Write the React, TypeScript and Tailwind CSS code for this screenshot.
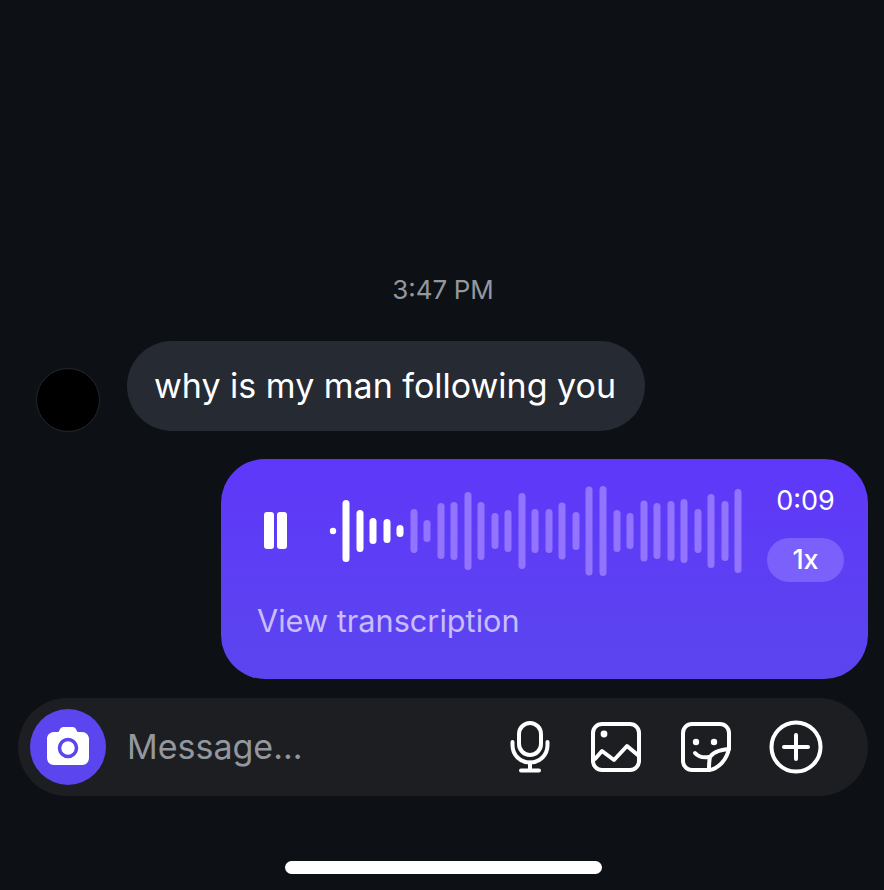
const font = { fontFamily: 'Inter, "Liberation Sans", sans-serif' }

// x position, height of each waveform bar, in px
const playedBars = [
  [346, 62],
  [360, 42],
  [373, 26],
  [387, 24],
]
const restBars = [
  [414, 44], [427, 22], [441, 56], [454, 58], [468, 78], [481, 58], [495, 36], [508, 42],
  [522, 76], [535, 44], [549, 44], [562, 57], [576, 38], [589, 89], [603, 90], [617, 42],
  [630, 36], [644, 61], [657, 56], [671, 60], [684, 64], [698, 44], [711, 74], [725, 60],
  [738, 84],
]

function Waveform() {
  return (
    <svg width="416" height="92" viewBox="329 485 416 92" className="shrink-0">
      <circle cx="333" cy="531" r="3.2" fill="#fff" />
      {playedBars.map(([x, h]) => (
        <rect key={x} x={x - 3.5} y={531 - h / 2} width="7" height={h} rx="3.5" fill="#fff" />
      ))}
      <rect x="396.5" y="525" width="7" height="12" rx="3.5" fill="#fff" />
      {restBars.map(([x, h]) => (
        <rect key={x} x={x - 3.5} y={531 - h / 2} width="7" height={h} rx="3.5" fill="#9274ff" />
      ))}
    </svg>
  )
}

function CameraIcon() {
  return (
    <svg width="44" height="42" viewBox="0 0 44 42">
      <path
        d="M8 6h4.5l1.6-3C15 1.4 16.400 1 18 1h8c1.600 0 3 .4 3.900 2l1.600 3H36c4 0 7 3 7 7v19c0 4-3 7-7 7H8c-4 0-7-3-7-7V13c0-4 3-7 7-7z"
        fill="#fff"
      />
      <circle cx="22" cy="22" r="8.500" fill="none" stroke="#5b45ee" strokeWidth="3.500" />
    </svg>
  )
}

function MicIcon() {
  return (
    <svg width="40" height="52" viewBox="0 0 40 52" fill="none" stroke="#fff" strokeWidth="4" strokeLinecap="round">
      <rect x="9" y="2" width="22" height="32" rx="11" />
      <path d="M2.500 21v3c0 10 7.500 17.500 17.500 17.500S37.500 34 37.500 24v-3" />
      <path d="M20 41.500V49M11 49.500h18" />
    </svg>
  )
}

function ImageIcon() {
  return (
    <svg width="50" height="50" viewBox="0 0 50 50" fill="none" stroke="#fff" strokeWidth="4" strokeLinecap="round" strokeLinejoin="round">
      <rect x="2" y="2" width="46" height="46" rx="9" />
      <path d="M4 37l7-8 12 9 13-14 12 10" />
      <circle cx="13" cy="12" r="3.400" fill="#fff" stroke="none" />
    </svg>
  )
}

function StickerIcon() {
  return (
    <svg width="50" height="50" viewBox="0 0 50 50" fill="none" stroke="#fff" strokeWidth="4" strokeLinecap="round" strokeLinejoin="round">
      <path d="M48 26V11c0-5-4-9-9-9H11c-5 0-9 4-9 9v28c0 5 4 9 9 9h17C37 47 46 38 48 26z" />
      <path d="M48 27C41 28 33 29 29 35c-1 4-1 9-1 13" />
      <path d="M14 31c3 3.500 8 5 14 4" />
      <circle cx="15" cy="20" r="3.200" fill="#fff" stroke="none" />
      <circle cx="33" cy="20" r="3.200" fill="#fff" stroke="none" />
    </svg>
  )
}

function PlusIcon() {
  return (
    <svg width="54" height="54" viewBox="0 0 54 54" fill="none" stroke="#fff" strokeWidth="4" strokeLinecap="round">
      <circle cx="27" cy="27" r="24.500" />
      <path d="M27 15v24M15 27h24" />
    </svg>
  )
}

export default function App() {
  return (
    <div className="flex h-[890px] w-[884px] flex-col overflow-hidden bg-[#0d1116]" style={font}>
      <div className="pl-[2px] pt-[274px] text-center text-[26px] leading-[32px] text-[#94979e] [word-spacing:-1px]">3:47 PM</div>

      <div className="mt-[35px] flex items-start pl-[36px]">
        <div className="mt-[27px] h-[64px] w-[64px] rounded-full border border-[#23262b] bg-black" />
        <div className="ml-[27px] flex h-[90px] w-[518px] items-center rounded-[45px] bg-[#262a33] pb-[2px] pl-[27px] text-[34px] text-white">
          why is my man following you
        </div>
      </div>

      <div className="mt-[27px] ml-[221px] h-[220px] w-[647px] rounded-[44px] bg-gradient-to-b from-[#5f37fa] to-[#5b45ee] pl-[37px] pr-[24px] pt-[26px]">
        <div className="flex items-start">
          <div className="mt-[27px] flex gap-[3px] pl-[6px]">
            <span className="h-[37px] w-[10px] rounded-[3px] bg-white" />
            <span className="h-[37px] w-[10px] rounded-[3px] bg-white" />
          </div>
          <div className="ml-[42px]">
            <Waveform />
          </div>
          <div className="ml-[22px] flex w-[77px] flex-col items-center">
            <span className="text-[27px] leading-[32px] text-white">0:09</span>
            <span className="mt-[21px] flex h-[44px] w-[77px] items-center justify-center rounded-full bg-[#7c60fb] text-[27px] font-medium text-white">
              1x
            </span>
          </div>
        </div>
        <div className="mt-[21px] -ml-px text-[30.700px] leading-[36px] text-[#c8bdfd]">View transcription</div>
      </div>

      <div className="mt-[19px] ml-[18px] flex h-[98px] w-[850px] items-center rounded-full bg-[#1c1e22] pl-[12px]">
        <div className="flex h-[76px] w-[76px] items-center justify-center rounded-full bg-[#5b45ee]">
          <CameraIcon />
        </div>
        <span className="ml-[21px] pb-[2px] text-[34px] text-[#94979e]">Message...</span>
        <div className="ml-auto flex items-center pr-[45px]">
          <MicIcon />
          <span className="ml-[41px]">
            <ImageIcon />
          </span>
          <span className="ml-[40px]">
            <StickerIcon />
          </span>
          <span className="ml-[38px]">
            <PlusIcon />
          </span>
        </div>
      </div>

      <div className="mt-[65px] ml-[285px] h-[13px] w-[317px] rounded-full bg-white" />
    </div>
  )
}
